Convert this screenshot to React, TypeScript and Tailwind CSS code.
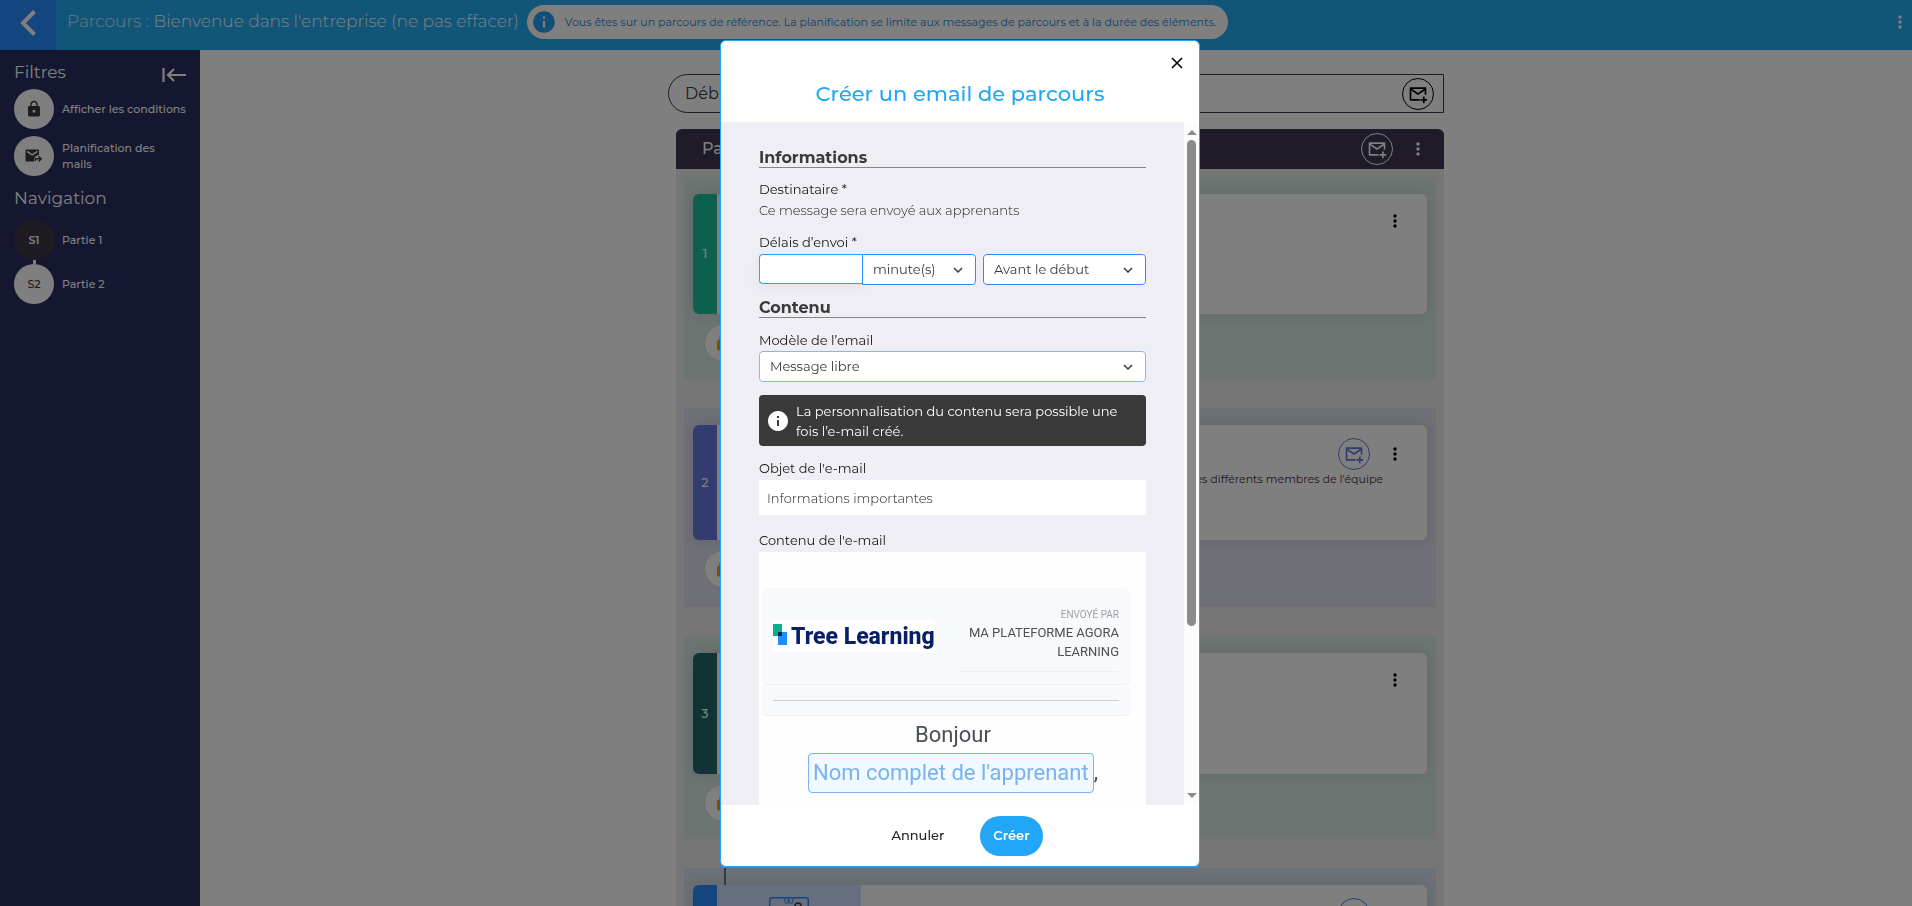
import type { ReactNode } from 'react';
import { MdInfo, MdLock, MdMoreVert } from 'react-icons/md';

function MailPlus({ className = 'size-5' }: { className?: string }) {
  return (
    <svg viewBox="0 0 24 24" className={className} fill="none" stroke="currentColor" strokeWidth="2" aria-hidden="true">
      <path d="M14 19H3V5h18v8" strokeLinejoin="round" />
      <path d="M3 6l9 6 9-6" />
      <path d="M19 15v8M15 19h8" />
    </svg>
  );
}

function MailForward() {
  return (
    <svg viewBox="0 0 18 14" className="h-3.5 w-[18px]" aria-hidden="true">
      <path d="M1.5 0.5h11.5q1 0 1 1v4.6a5 5 0 0 0-5 5.9v0.5H1.5q-1 0-1-1v-10q0-1 1-1z" fill="currentColor" />
      <path d="M2 2.4l5.2 3.5L12.5 2.4" fill="none" stroke="#fff" strokeWidth="1.4" />
      <path d="M10.3 12v-2.2h5M13.5 7.2l2.8 2.7-2.8 2.7" fill="none" stroke="currentColor" strokeWidth="1.4" />
    </svg>
  );
}

function MailButton({ className = '' }: { className?: string }) {
  return (
    <button
      type="button"
      aria-label="Ajouter un email"
      className={`flex size-8 shrink-0 items-center justify-center rounded-full border ${className}`}
    >
      <MailPlus />
    </button>
  );
}

function MenuButton({ className = '' }: { className?: string }) {
  return (
    <button type="button" aria-label="Options" className={`flex size-5 shrink-0 items-center justify-center ${className}`}>
      <MdMoreVert className="size-5" />
    </button>
  );
}

function SidebarRow({ icon, children, dark = false }: { icon: ReactNode; children: ReactNode; dark?: boolean }) {
  return (
    <button type="button" className="flex w-full items-center gap-2 text-left text-[11px] leading-4 font-medium text-white">
      <span
        className={`flex size-10 shrink-0 items-center justify-center rounded-full ${
          dark ? 'bg-[#3e3646] text-white' : 'bg-white text-[#3a3440]'
        }`}
      >
        {icon}
      </span>
      <span className="min-w-0">{children}</span>
    </button>
  );
}

function Sidebar() {
  return (
    <aside className="flex w-[200px] shrink-0 flex-col bg-[#282f5e] px-3.5 pt-1.5 text-white">
      <div className="flex h-[33px] items-start justify-between">
        <h2 className="text-[17px] leading-8">Filtres</h2>
        <button type="button" aria-label="Replier le menu" className="pt-3">
          <svg viewBox="0 0 24 14" className="h-3.5 w-6" fill="none" stroke="currentColor" strokeWidth="2.2" aria-hidden="true">
            <path d="M1.5 0v14M24 7H6M12 1L6 7l6 6" />
          </svg>
        </button>
      </div>
      <div className="flex flex-col gap-[7px]">
        <SidebarRow icon={<MdLock className="size-[18px]" />}>
          <span className="whitespace-nowrap">Afficher les conditions</span>
        </SidebarRow>
        <SidebarRow icon={<MailForward />}>Planification des mails</SidebarRow>
      </div>
      <h2 className="mt-2 text-[17px] leading-7">Navigation</h2>
      <div className="mt-2 flex flex-col">
        <SidebarRow dark icon={<b className="font-semibold">S1</b>}>
          Partie 1
        </SidebarRow>
        <span className="ml-[19px] h-1 w-[3px] bg-white" />
        <SidebarRow icon="S2">Partie 2</SidebarRow>
      </div>
    </aside>
  );
}

function TopBar() {
  return (
    <header className="flex h-[50px] shrink-0 bg-[#22aaf2] text-white">
      <button type="button" aria-label="Retour" className="flex w-14 items-center justify-center bg-[#268dff] pb-1">
        <svg viewBox="0 0 16 26" className="h-[26px] w-4" fill="none" stroke="currentColor" strokeWidth="4" aria-hidden="true">
          <path d="M14.5 1.5L3 13l11.5 11.5" />
        </svg>
      </button>
      <div className="flex h-11 min-w-0 flex-1 items-center gap-2 pr-0.5 pl-[11px]">
        <h1 className="text-[17px] font-light whitespace-nowrap">
          <span className="text-white/80">Parcours :</span> Bienvenue dans l'entreprise (ne pas effacer)
        </h1>
        <p className="flex h-[34px] items-center gap-2 rounded-full bg-white pr-3 pl-1 text-[11px] whitespace-nowrap text-[#2186d8]">
          <MdInfo className="size-[26px] text-[#22a0ec]" />
          Vous êtes sur un parcours de référence. La planification se limite aux messages de parcours et à la durée des
          éléments.
        </p>
        <MenuButton className="ml-auto" />
      </div>
    </header>
  );
}

type Step = {
  n: number;
  tile: string;
  strip: string;
  card: string;
  foot: string;
  mail?: string;
  text?: string;
};

const steps: Step[] = [
  { n: 1, tile: 'bg-[#d8eae4]', strip: 'bg-[#1cc09d]', card: 'h-[120px]', foot: 'h-[65px]' },
  {
    n: 2,
    tile: 'bg-[#dfe0ee]',
    strip: 'bg-[#6678e2]',
    card: 'h-[115px]',
    foot: 'h-[67px]',
    mail: 'border-[#6678e2] text-[#6678e2]',
    text: "Rencontrez les différents membres de l'équipe",
  },
  { n: 3, tile: 'bg-[#d8eae4]', strip: 'bg-[#20696c]', card: 'h-[121px]', foot: 'h-[65px]' },
  {
    n: 4,
    tile: 'bg-[#d8e2ee]',
    strip: 'bg-[#268dff]',
    card: 'h-[121px]',
    foot: 'h-[65px]',
    mail: 'border-[#268dff] text-[#268dff]',
  },
];

function StepTile({ step }: { step: Step }) {
  const illustrated = step.n === 4;
  return (
    <li className={`relative px-[9px] pt-[17px] ${step.tile}`}>
      {illustrated && <span className="absolute top-0 left-10 h-[17px] w-0.5 bg-[#6d7378]" />}
      <article className={`flex overflow-hidden rounded-md bg-white shadow-[0_0_14px_rgba(60,60,90,0.14)] ${step.card}`}>
        <span className={`flex w-6 shrink-0 items-center justify-center text-xs font-medium text-white ${step.strip}`}>
          {step.n}
        </span>
        {illustrated && (
          <span className="flex w-36 shrink-0 justify-center bg-[#cdddff] pt-3">
            <svg viewBox="0 0 40 32" className="h-8 w-10" fill="none" stroke="#268dff" aria-hidden="true">
              <rect x="0.75" y="0.75" width="38.5" height="30" rx="2" strokeWidth="1.5" />
              <path d="M16 1v4q0 1 1 1h6q1 0 1-1V1" />
              <path d="M19 2l2 1.5-2 1.5z" fill="#268dff" />
              <circle cx="29" cy="9" r="3" stroke="#3e3652" strokeWidth="1.5" />
            </svg>
          </span>
        )}
        <div className="flex flex-1 flex-col pr-[22px]">
          <div className={`flex items-center justify-end gap-[15px] ${step.mail ? 'pt-[13px]' : 'pt-[17px]'}`}>
            {step.mail && <MailButton className={step.mail} />}
            <MenuButton className="text-black" />
          </div>
          {step.text && <p className="mr-[22px] text-right text-[11px] leading-[18px] text-[#3a3440]">{step.text}</p>}
        </div>
      </article>
      <div className={`flex px-[11px] pt-2.5 ${step.foot}`}>
        <span className="flex size-[38px] items-center justify-center rounded-full border border-[#d8d8d8] bg-white">
          <MdLock className="size-[18px] text-[#f5a300]" />
        </span>
      </div>
    </li>
  );
}

function Timeline() {
  return (
    <main className="min-w-0 flex-1 overflow-hidden bg-white pt-6">
      <div className="mx-auto w-[776px] max-w-full">
        <div className="flex h-[39px] items-center justify-between rounded-l-full border border-[#3e3652] pr-[9px] pl-4 text-base text-[#3a3440]">
          Début
          <MailButton className="border-black text-black" />
        </div>
        <section className="mt-4 ml-2 rounded-t-md bg-[#ececec]">
          <header className="flex h-10 items-center rounded-t-md bg-[#3e3652] pr-4 pl-[26px] text-base font-medium text-white">
            <h2 className="flex-1">Partie 1</h2>
            <MailButton className="mr-[15px] border-white" />
            <MenuButton />
          </header>
          <ol className="flex flex-col gap-[29px] p-2">
            {steps.map((s) => (
              <StepTile key={s.n} step={s} />
            ))}
          </ol>
        </section>
      </div>
    </main>
  );
}

function Select({ id, value, className = '', label }: { id: string; value: string; className?: string; label?: string }) {
  return (
    <div className={`relative ${className}`}>
      <select
        id={id}
        aria-label={label}
        defaultValue={value}
        className="h-full w-full appearance-none rounded-[inherit] bg-white pr-8 pl-2.5 text-[13px] text-[#3a3a3a] outline-none"
      >
        <option>{value}</option>
      </select>
      <svg
        viewBox="0 0 10 6"
        className="pointer-events-none absolute top-3 right-3 h-1.5 w-2.5"
        fill="none"
        stroke="#3a3a3a"
        strokeWidth="1.5"
        aria-hidden="true"
      >
        <path d="M1 1l4 4 4-4" />
      </svg>
    </div>
  );
}

function SectionTitle({ children }: { children: ReactNode }) {
  return <h3 className="border-b border-[#85858b] text-base leading-[18px] font-bold text-[#3a3a3a]">{children}</h3>;
}

const labelClass = 'block text-[13px] leading-5 text-[#181818]';

function EmailPreview() {
  return (
    <div className="bg-[#fefefe] pt-9 pr-[15px] pl-0.5 font-[Roboto,sans-serif] text-[#4a4f55]">
      <div className="flex h-[97px] items-start justify-between rounded-md border-b border-[#eef0f2] bg-[#f8f9fc] px-3 pt-[18px]">
        <svg viewBox="0 0 162 32" className="mt-3.5 h-8 w-[162px]" role="img" aria-label="Tree Learning">
          <rect width="162" height="32" rx="4" fill="#fff" />
          <rect y="4" width="9" height="12" fill="#0bb08a" />
          <rect x="5" y="12" width="9" height="13" fill="#1e8dff" />
          <rect x="5" y="12" width="4" height="4" fill="#0b1f66" />
          <text x="18" y="24" fill="#0b1f66" fontFamily="Roboto, sans-serif" fontWeight="800" fontSize="23">
            Tree Learning
          </text>
        </svg>
        <div className="w-40 pt-px text-right">
          <p className="text-[10px] leading-4 text-[#9aa0a8]">ENVOYÉ PAR</p>
          <p className="text-[13px] leading-[19px]">MA PLATEFORME AGORA LEARNING</p>
          <div className="mt-2.5 h-px bg-[#eceef0]" />
        </div>
      </div>
      <div className="flex h-[31px] items-center rounded-md border-b border-[#eef0f2] bg-[#f8f9fc] px-3 pt-px">
        <div className="h-px w-full bg-[#cfd2d6]" />
      </div>
      <div className="pl-3.5 text-center text-[22px] leading-[37px]">
        <p>Bonjour</p>
        <p className="flex justify-center">
          <span className="h-10 rounded border border-[#7ab2ee] bg-[#f0f9ff] px-1 whitespace-nowrap text-[#7ab2ee]">
            Nom complet de l'apprenant
          </span>
          ,
        </p>
      </div>
      <div className="h-60" />
    </div>
  );
}

function EmailDialog() {
  return (
    <div
      role="dialog"
      aria-modal="true"
      aria-labelledby="dialog-title"
      className="flex h-full w-[480px] flex-col overflow-hidden rounded-md border border-[#22a7f8] bg-white"
    >
      <header className="flex h-[81px] shrink-0 flex-col px-3 pt-3">
        <button type="button" aria-label="Fermer" className="flex size-5 items-center justify-center self-end text-black">
          <svg viewBox="0 0 12 12" className="size-3" fill="none" stroke="currentColor" strokeWidth="1.6" aria-hidden="true">
            <path d="M1 1l10 10M11 1L1 11" />
          </svg>
        </button>
        <h2 id="dialog-title" className="mt-[9px] text-center text-[21px] leading-6 font-medium text-[#22a7f8]">
          Créer un email de parcours
        </h2>
      </header>

      <div className="flex min-h-0 flex-1">
        <form className="min-w-0 flex-1 overflow-hidden bg-[#efeef4] px-[38px] pt-[27px]">
          <SectionTitle>Informations</SectionTitle>
          <p className={`mt-[11px] ${labelClass}`}>Destinataire *</p>
          <p className="text-[13px] leading-[22px] font-light text-[#222]">Ce message sera envoyé aux apprenants</p>
          <label htmlFor="delay" className={`mt-[11px] ${labelClass}`}>
            Délais d’envoi *
          </label>
          <div className="mt-0.5 flex h-[31px] items-start">
            <input
              id="delay"
              type="text"
              className="h-[30px] w-[103px] rounded-l border border-r-0 border-[#22a7f8] bg-white px-2 text-[13px] shadow-[0_4px_12px_rgba(60,60,90,0.06)] outline-none"
            />
            <Select id="unit" label="Unité" value="minute(s)" className="h-[31px] w-[114px] rounded-r border border-[#268dff]" />
            <Select id="when" label="Moment" value="Avant le début" className="ml-[7px] h-[31px] flex-1 rounded border border-[#268dff]" />
          </div>

          <div className="mt-3.5">
            <SectionTitle>Contenu</SectionTitle>
          </div>
          <label htmlFor="template" className={`mt-3 ${labelClass}`}>
            Modèle de l’email
          </label>
          <Select id="template" value="Message libre" className="mt-px h-[31px] rounded border border-[#86b7fe]" />

          <div className="mt-[13px] flex h-[51px] items-center gap-1.5 rounded bg-[#3a3a3a] pr-4 pl-[7px] text-[13px] leading-5 text-white">
            <MdInfo className="size-6 shrink-0" />
            <p>La personnalisation du contenu sera possible une fois l’e-mail créé.</p>
          </div>

          <label htmlFor="subject" className={`mt-3 ${labelClass}`}>
            Objet de l'e-mail
          </label>
          <input
            id="subject"
            type="text"
            defaultValue="Informations importantes"
            className="mt-0.5 block h-[35px] w-full bg-white px-2 text-[13px] font-light text-[#222] outline-none"
          />
          <p className={`mt-[15px] mb-0.5 ${labelClass}`}>Contenu de l'e-mail</p>
          <EmailPreview />
        </form>
        <div className="flex w-[15px] shrink-0 flex-col items-center justify-between bg-[#fcfcfc] pt-2 pb-[7px]" aria-hidden="true">
          <svg viewBox="0 0 10 5" className="h-[5px] w-2.5 shrink-0" fill="#8b8b8b">
            <path d="M5 0l5 5H0z" />
          </svg>
          <div className="my-[5px] flex min-h-0 flex-1 flex-col">
            <div className="h-3/4 w-[9px] rounded-full bg-[#8b8b8b]" />
          </div>
          <svg viewBox="0 0 10 5" className="h-[5px] w-2.5 shrink-0" fill="#8b8b8b">
            <path d="M0 0h10L5 5z" />
          </svg>
        </div>
      </div>

      <footer className="flex h-[61px] shrink-0 items-center justify-center gap-6 pl-0.5 text-[13px]">
        <button type="button" className="px-3 py-2 font-medium text-[#222]">
          Annuler
        </button>
        <button type="button" className="h-10 rounded-full bg-[#22a7f8] px-[13px] font-semibold text-white">
          Créer
        </button>
      </footer>
    </div>
  );
}

export default function App() {
  return (
    <div className="font-[Montserrat,Inter,sans-serif]">
      <div className="flex h-screen flex-col overflow-hidden">
        <TopBar />
        <div className="flex min-h-0 flex-1">
          <Sidebar />
          <Timeline />
        </div>
      </div>
      <div className="fixed inset-0 flex justify-center bg-black/50 pt-10 pb-[39px] pl-2">
        <EmailDialog />
      </div>
    </div>
  );
}
